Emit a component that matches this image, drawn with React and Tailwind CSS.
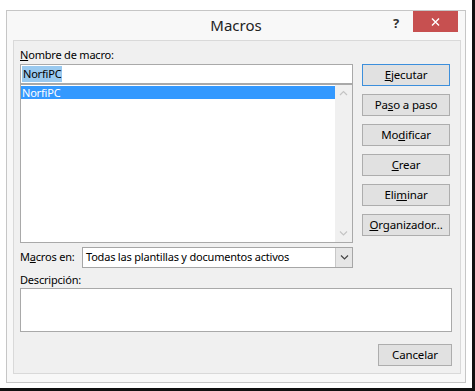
import React from 'react';

const font = { fontFamily: '"Noto Sans", "Open Sans", sans-serif' };

function Chevron({ dir = 'down', className = '' }) {
  const points = dir === 'up' ? '1,5 4.5,1.5 8,5' : '1,1.5 4.5,5 8,1.5';
  return (
    <svg width="9" height="7" viewBox="0 0 9 7" className={className}>
      <polyline points={points} fill="none" stroke="currentColor" strokeWidth="1.2" />
    </svg>
  );
}

function DlgButton({ children, isDefault = false, className = '' }) {
  return (
    <button
      className={`h-[22px] flex items-center justify-center bg-[#e1e1e1] text-[11.5px] tracking-[-0.15px] text-black border ${
        isDefault ? 'border-[#3c8fdc]' : 'border-[#adadad]'
      } ${className}`}
    >
      {children}
    </button>
  );
}

export default function App() {
  return (
    <div
      className="w-[475px] h-[391px] bg-white border-r-[3px] border-b-[3px] border-[#111] overflow-hidden"
      style={font}
    >
      {/* Window frame */}
      <div className="ml-[6px] mt-[10px] w-[460px] h-[373px] border border-[#c6c6c6] bg-[#f8f8f8] flex flex-col">
        {/* Title bar */}
        <div className="relative h-[29px] flex items-center justify-center">
          <span className="text-[15px] text-[#222] leading-none">Macros</span>
          <span className="absolute left-[386px] top-[3px] text-[13px] font-bold text-[#333]">?</span>
          <div className="absolute left-[406px] top-0 w-[45px] h-[21px] bg-[#c75050] flex items-center justify-center">
            <svg width="9" height="8" viewBox="0 0 9 8">
              <path d="M1 0.5 L8 7.5 M8 0.5 L1 7.5" stroke="white" strokeWidth="1.4" />
            </svg>
          </div>
        </div>

        {/* Client area */}
        <div className="ml-[6px] w-[448px] h-[334px] border border-[#d9d9d9] bg-[#f0f0f0] pl-[6px] pt-[6px] flex flex-col text-[11px] tracking-[-0.2px] text-black">
          <div className="flex">
            <div className="w-[333px] flex flex-col">
              <div className="h-[16px] leading-[16px] mb-[1px]">
                <u>N</u>ombre de macro:
              </div>
              <div className="h-[20px] bg-white border border-[#a9a9a9] flex items-center pl-[1px]">
                <span className="bg-[#99c9ef] px-[1px] leading-[16px]">NorfiPC</span>
              </div>
              <div className="h-[159px] bg-white border border-[#a9a9a9] flex">
                <div className="flex-1 pt-[1px]">
                  <div className="h-[13px] bg-[#3399ff] text-white leading-[13px] pl-[1px]">NorfiPC</div>
                </div>
                <div className="w-[17px] bg-[#f0f0f0] flex flex-col items-center justify-between py-[5px] text-[#c4c4c4]">
                  <Chevron dir="up" />
                  <Chevron dir="down" />
                </div>
              </div>
            </div>

            <div className="ml-[9px] mt-[17px] w-[88px] flex flex-col gap-[8px]">
              <DlgButton isDefault>
                <span><u>E</u>jecutar</span>
              </DlgButton>
              <DlgButton>
                <span>Pa<u>s</u>o a paso</span>
              </DlgButton>
              <DlgButton>
                <span>Mo<u>d</u>ificar</span>
              </DlgButton>
              <DlgButton>
                <span><u>C</u>rear</span>
              </DlgButton>
              <DlgButton>
                <span>Eli<u>m</u>inar</span>
              </DlgButton>
              <DlgButton>
                <span><u>O</u>rganizador...</span>
              </DlgButton>
            </div>
          </div>

          <div className="mt-[4px] flex items-center w-[333px]">
            <div className="w-[62px]">
              M<u>a</u>cros en:
            </div>
            <div className="flex-1 h-[21px] bg-white border border-[#a6a6a6] flex">
              <div className="flex-1 pl-[3px] flex items-center">Todas las plantillas y documentos activos</div>
              <div className="w-[17px] bg-[#e6e6e6] border-l border-[#c8c8c8] flex items-center justify-center text-[#444]">
                <Chevron dir="down" />
              </div>
            </div>
          </div>

          <div className="mt-[4px] h-[16px] leading-[16px]">Descripción:</div>
          <div className="w-[432px] h-[44px] bg-white border border-[#a9a9a9]" />

          <div className="mt-[12px] w-[432px] flex justify-end">
            <DlgButton className="w-[74px]">Cancelar</DlgButton>
          </div>
        </div>
      </div>
    </div>
  );
}
